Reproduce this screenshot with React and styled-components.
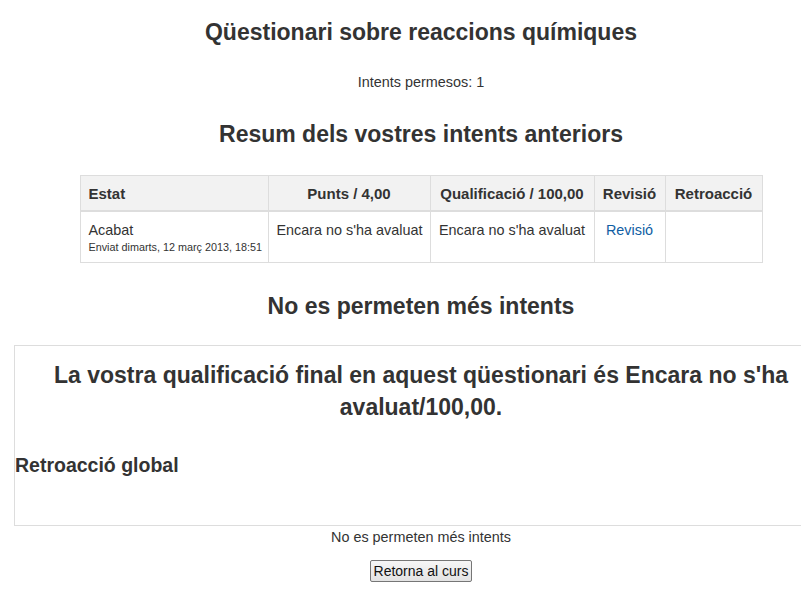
import React from "react";
import styled, { createGlobalStyle } from "styled-components";

const GlobalStyle = createGlobalStyle`
  html, body { margin: 0; padding: 0; background: #fff; overflow: hidden; }
  body {
    font-family: "Liberation Sans", Arial, sans-serif;
    font-size: 14px;
    color: #333;
  }
`;

const Page = styled.div`
  width: 814px;
  margin-left: 14px;
  text-align: center;
`;

const Title = styled.h2`
  margin: 0;
  padding-top: 19px;
  font-size: 23px;
  line-height: 26px;
  font-weight: bold;
`;

const Info = styled.p`
  margin: 28px 0 0;
  font-size: 14.4px;
  line-height: 18px;
`;

const SectionTitle = styled.h3`
  margin: ${(p) => p.$top || 30}px 0 0;
  font-size: 23px;
  line-height: 26px;
  font-weight: bold;
`;

const Table = styled.table`
  border-collapse: collapse;
  table-layout: fixed;
  margin: 28px auto 0;
  width: 682px;
  border: 1px solid #ddd;
`;

const Th = styled.th`
  background: #f2f2f2;
  border: 1px solid #ddd;
  border-bottom: 2px solid #ddd;
  height: 34px;
  padding: 0 8px;
  font-size: 15px;
  font-weight: bold;
  text-align: ${(p) => p.$align || "center"};
  white-space: nowrap;
`;

const Td = styled.td`
  border: 1px solid #ddd;
  padding: 9px 8px 0;
  height: 51px;
  box-sizing: border-box;
  vertical-align: top;
  text-align: ${(p) => p.$align || "center"};
  font-size: 14.4px;
  line-height: 18px;
  white-space: nowrap;
`;

const Small = styled.span`
  display: block;
  font-size: 10.8px;
  line-height: 16px;
`;

const Link = styled.a`
  color: #0f5ea3;
  text-decoration: none;
`;

const FeedbackBox = styled.div`
  margin-top: 26px;
  border: 1px solid #ddd;
  height: 179px;
  text-align: left;
  font-family: "Liberation Sans Narrow", "Liberation Sans", Arial, sans-serif;
`;

const Grade = styled.h3`
  margin: 13px 0 0;
  padding: 0 20px;
  font-size: 23px;
  line-height: 32px;
  text-align: center;
  font-weight: bold;
`;

const GlobalTitle = styled.h3`
  margin: 30px 0 0;
  font-size: 19.5px;
  line-height: 24px;
  font-weight: bold;
`;

const Note = styled.div`
  margin: 2px 0 0;
  font-size: 14.4px;
  line-height: 18px;
`;

const Button = styled.button`
  margin-top: 14px;
  font-family: "Liberation Sans", Arial, sans-serif;
  font-size: 14px;
  line-height: 16px;
  padding: 2px 3px 2px;
  height: 22px;
  color: #111;
  background: linear-gradient(#f6f6f6, #e3e3e3);
  border: 1px solid #767676;
  border-radius: 2px;
`;

const columns = [188, 162, 164, 71, 97];

export default function App() {
  return (
    <>
      <GlobalStyle />
      <Page>
        <Title>Qüestionari sobre reaccions químiques</Title>
        <Info>Intents permesos: 1</Info>
        <SectionTitle $top={30}>Resum dels vostres intents anteriors</SectionTitle>
        <Table>
          <colgroup>
            {columns.map((w, i) => (
              <col key={i} style={{ width: w }} />
            ))}
          </colgroup>
          <thead>
            <tr>
              <Th $align="left">Estat</Th>
              <Th>Punts / 4,00</Th>
              <Th>Qualificació / 100,00</Th>
              <Th>Revisió</Th>
              <Th>Retroacció</Th>
            </tr>
          </thead>
          <tbody>
            <tr>
              <Td $align="left">
                Acabat
                <Small>Enviat dimarts, 12 març 2013, 18:51</Small>
              </Td>
              <Td>Encara no s'ha avaluat</Td>
              <Td>Encara no s'ha avaluat</Td>
              <Td>
                <Link href="#">Revisió</Link>
              </Td>
              <Td></Td>
            </tr>
          </tbody>
        </Table>
        <SectionTitle $top={30}>No es permeten més intents</SectionTitle>
        <FeedbackBox>
          <Grade>
            La vostra qualificació final en aquest qüestionari és Encara no s'ha
            avaluat/100,00.
          </Grade>
          <GlobalTitle>Retroacció global</GlobalTitle>
        </FeedbackBox>
        <Note>No es permeten més intents</Note>
        <Button>Retorna al curs</Button>
      </Page>
    </>
  );
}
